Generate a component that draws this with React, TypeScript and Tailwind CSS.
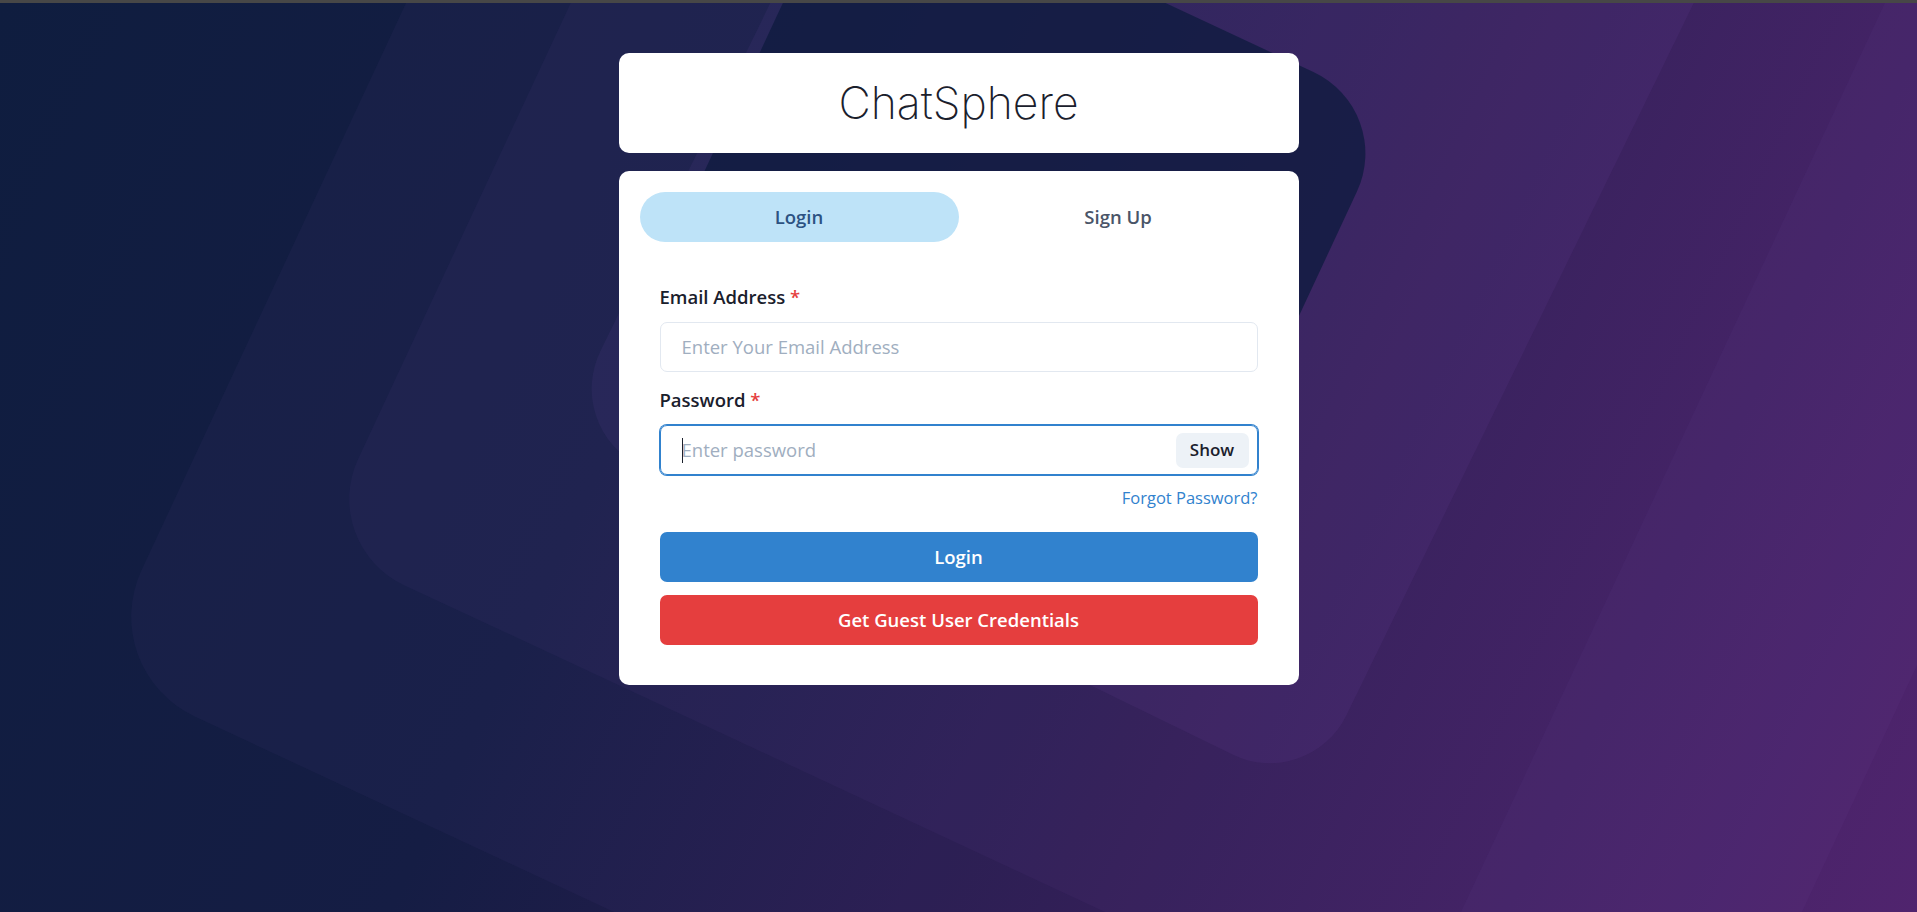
import React from "react";

function Background() {
  return (
    <svg
      className="absolute inset-0 h-full w-full"
      viewBox="0 0 1917 912"
      preserveAspectRatio="none"
      xmlns="http://www.w3.org/2000/svg"
    >
      <defs>
        <linearGradient id="bg" x1="0" y1="0" x2="1917" y2="912" gradientUnits="userSpaceOnUse">
          <stop offset="0" stopColor="#0f1d3f" />
          <stop offset="0.35" stopColor="#151d44" />
          <stop offset="0.65" stopColor="#2e1c52" />
          <stop offset="1" stopColor="#4a1e66" />
        </linearGradient>
      </defs>
      <rect x="0" y="0" width="1917" height="912" fill="url(#bg)" />
      {/* outer layer */}
      <g transform="translate(95,670) rotate(25)">
        <rect x="0" y="-1600" width="1900" height="1600" rx="110" fill="#8a5cc0" fillOpacity="0.05" />
      </g>
      {/* middle layer */}
      <g transform="translate(318,545) rotate(25)">
        <rect x="0" y="-1400" width="1500" height="1400" rx="95" fill="#8a5cc0" fillOpacity="0.06" />
      </g>
      {/* inner layer */}
      <g transform="translate(563,428) rotate(26)">
        <rect x="0" y="-1300" width="830" height="1300" rx="85" fill="#9b63d0" fillOpacity="0.07" />
      </g>
      {/* dark top shape */}
      <g transform="translate(1395,110) rotate(25)">
        <rect x="-600" y="0" width="600" height="520" rx="90" fill="#0e1b3d" fillOpacity="0.75" />
      </g>
      {/* top-right stripe */}
      <g transform="translate(1420,1000) rotate(25)">
        <rect x="0" y="-1500" width="900" height="1500" rx="90" fill="#8a5cc0" fillOpacity="0.05" />
      </g>
    </svg>
  );
}

export default function App() {
  const font = { fontFamily: '"Open Sans", "Noto Sans", sans-serif' };
  return (
    <div className="relative h-[912px] w-full overflow-hidden" style={font}>
      <Background />
      <div className="relative h-[3px] w-full bg-[#474747]" />
      <div className="relative mx-auto flex w-[680px] flex-col">
        <div className="mt-[50px] flex h-[100px] items-center justify-center rounded-[10px] bg-white">
          <span
            className="text-[44.5px] font-[250] leading-none text-[#1a202c]"
            style={{ fontFamily: 'Inter, "Open Sans", sans-serif' }}
          >
            ChatSphere
          </span>
        </div>
        <div className="mt-[18px] rounded-[10px] bg-white px-[21px] pb-[40px] pt-[21px]">
          <div className="flex">
            <button className="flex h-[50px] flex-1 items-center justify-center rounded-full bg-[#bee3f8] text-[18.5px] font-semibold text-[#2c5282]">
              Login
            </button>
            <button className="flex h-[50px] flex-1 items-center justify-center rounded-full text-[18.5px] font-semibold text-[#4a5568]">
              Sign Up
            </button>
          </div>
          <div className="flex flex-col px-[20px] pt-[41px]">
            <label className="block h-[28px] text-[18.5px] font-semibold leading-[28px] text-[#1a202c]">
              Email Address <span className="text-[#e53e3e]">*</span>
            </label>
            <div className="mt-[11px] flex h-[50px] items-center rounded-[7px] border border-[#e2e8f0] px-[21px]">
              <input
                className="w-full bg-transparent text-[18.5px] text-[#1a202c] outline-none placeholder:text-[#a0aec0]"
                placeholder="Enter Your Email Address"
              />
            </div>
            <label className="mt-[14px] block h-[28px] text-[18.5px] font-semibold leading-[28px] text-[#1a202c]">
              Password <span className="text-[#e53e3e]">*</span>
            </label>
            <div className="relative mt-[11px] flex h-[50px] items-center rounded-[7px] border border-[#3182ce] pl-[21px] pr-[8px] shadow-[0_0_0_1px_#3182ce]">
              <span className="absolute left-[21px] top-[12px] h-[25px] w-px bg-[#1a202c]" />
              <input
                className="w-full bg-transparent text-[18.5px] text-[#1a202c] outline-none placeholder:text-[#a0aec0]"
                placeholder="Enter password"
              />
              <button className="flex h-[35px] w-[73px] shrink-0 items-center justify-center rounded-[7px] bg-[#edf2f7] text-[17px] font-semibold text-[#1a202c]">
                Show
              </button>
            </div>
            <div className="mt-[9px] flex h-[28px] justify-end">
              <span className="text-[16.5px] leading-[28px] text-[#3182ce]">Forgot Password?</span>
            </div>
            <button className="mt-[20px] flex h-[50px] w-full items-center justify-center rounded-[7px] bg-[#3182ce] text-[18.5px] font-semibold text-white">
              Login
            </button>
            <button className="mt-[13px] flex h-[50px] w-full items-center justify-center rounded-[7px] bg-[#e53e3e] text-[18.5px] font-semibold text-white">
              Get Guest User Credentials
            </button>
          </div>
        </div>
      </div>
    </div>
  );
}
